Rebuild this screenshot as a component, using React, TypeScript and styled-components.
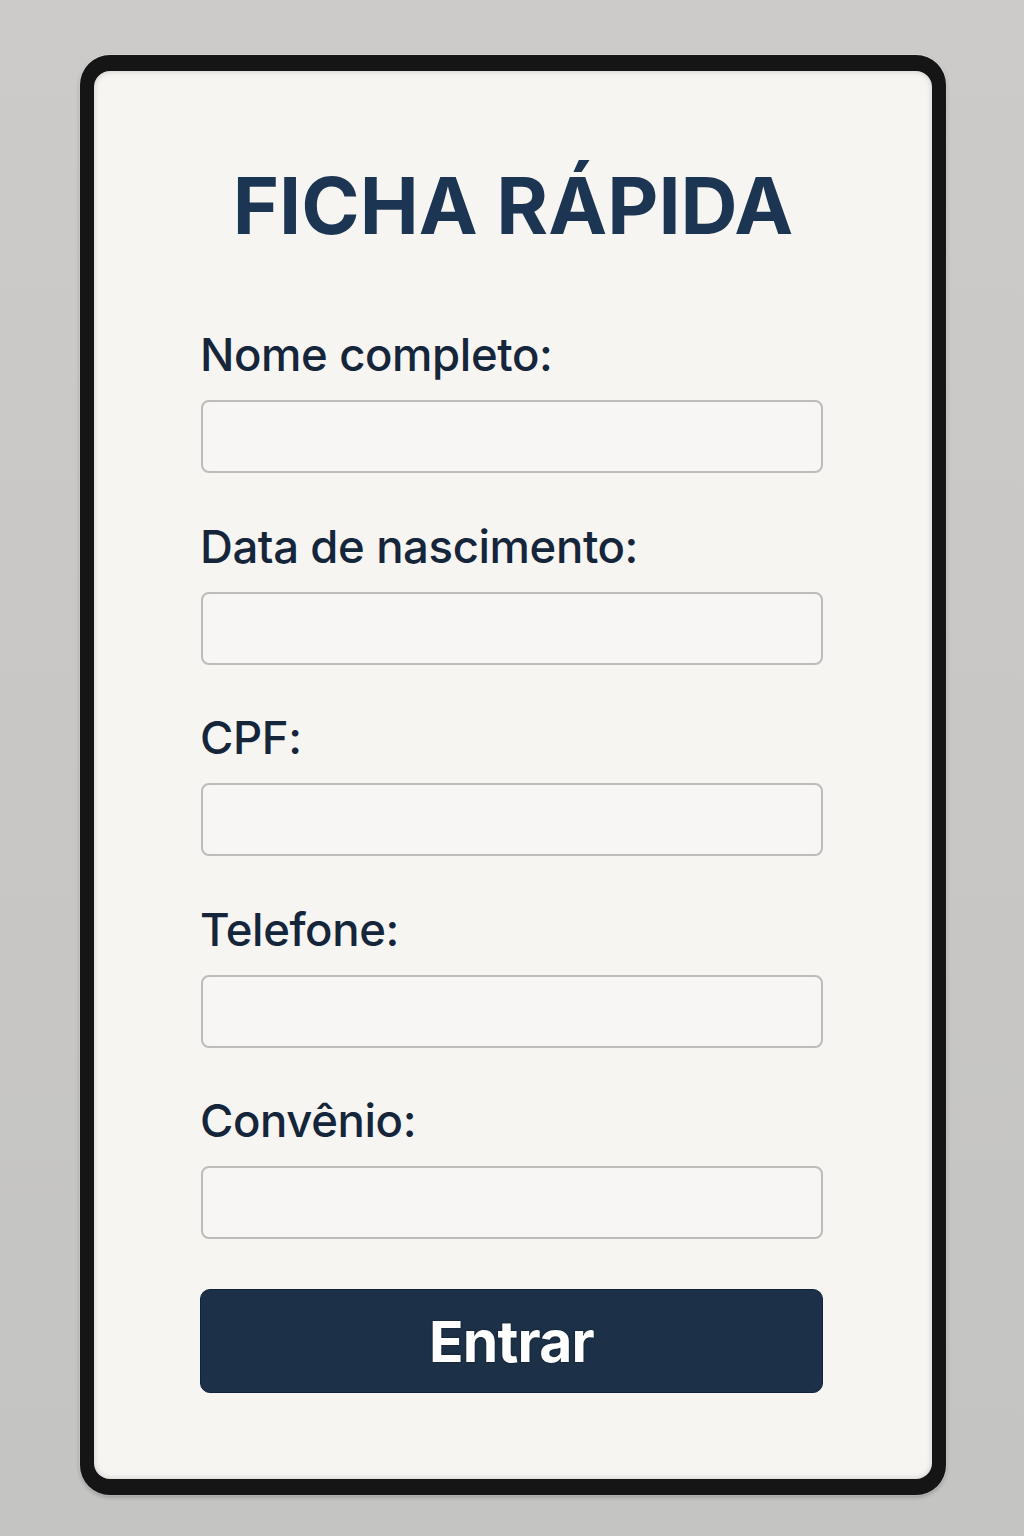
import React from "react";
import styled, { createGlobalStyle } from "styled-components";

const GlobalStyle = createGlobalStyle`
  html, body {
    margin: 0;
    padding: 0;
  }
  body {
    background: linear-gradient(180deg, #cccbc9 0%, #c8c7c5 50%, #c4c4c2 100%);
    font-family: Inter, "Liberation Sans", Arial, sans-serif;
    min-height: 1536px;
  }
`;

const Page = styled.div`
  width: 1024px;
  height: 1536px;
  box-sizing: border-box;
  padding-top: 55px;
  display: flex;
  justify-content: center;
  align-items: flex-start;
`;

const Device = styled.div`
  width: 866px;
  height: 1440px;
  box-sizing: border-box;
  margin-left: 2px;
  background: #151515;
  border-radius: 30px;
  padding: 16px 14px 16px 14px;
  display: flex;
  box-shadow: 0 2px 4px rgba(0, 0, 0, 0.25), 0 0 0 1px rgba(255, 255, 255, 0.35);
`;

const Screen = styled.main`
  flex: 1;
  background: #f6f5f2;
  border-radius: 16px;
  box-shadow: inset 0 0 6px rgba(0, 0, 0, 0.18);
  padding: 95px 109px 0 106px;
  display: flex;
  flex-direction: column;
  align-items: stretch;
`;

const Title = styled.h1`
  margin: 0 0 82px 3px;
  font-family: Inter, "Liberation Sans", Arial, sans-serif;
  font-weight: 700;
  font-size: 79px;
  line-height: 79px;
  letter-spacing: 0px;
  color: #1c3552;
  text-align: center;
`;

const Form = styled.form`
  display: flex;
  flex-direction: column;
  gap: 45.5px;
`;

const Field = styled.label`
  display: flex;
  flex-direction: column;
  gap: 17px;
`;

const LabelText = styled.span`
  font-family: Inter, "Liberation Sans", Arial, sans-serif;
  font-weight: 500;
  font-size: 45.5px;
  line-height: 56px;
  color: #15253a;
  letter-spacing: -0.4px;
`;

const Input = styled.input`
  box-sizing: border-box;
  width: calc(100% - 1px);
  height: 73px;
  margin-left: 1px;
  border: 2px solid #bcbcbb;
  border-radius: 8px;
  background: #f7f6f4;
  font-family: Inter, "Liberation Sans", Arial, sans-serif;
  font-size: 28px;
  padding: 0 16px;
  outline: none;
`;

const SubmitButton = styled.button`
  margin-top: 4.5px;
  height: 104px;
  border: 1px solid #12223a;
  border-radius: 10px;
  background: #1c3047;
  color: #ffffff;
  font-family: Inter, "Liberation Sans", Arial, sans-serif;
  font-weight: 700;
  font-size: 57px;
  letter-spacing: -0.8px;
  cursor: pointer;
  text-shadow: 0 0 2px rgba(0, 0, 0, 0.6);
`;

const fields = [
  "Nome completo:",
  "Data de nascimento:",
  "CPF:",
  "Telefone:",
  "Convênio:",
];

export default function App() {
  return (
    <>
      <GlobalStyle />
      <Page>
        <Device>
          <Screen>
            <Title>FICHA RÁPIDA</Title>
            <Form onSubmit={(e) => e.preventDefault()}>
              {fields.map((f) => (
                <Field key={f}>
                  <LabelText>{f}</LabelText>
                  <Input type="text" />
                </Field>
              ))}
              <SubmitButton type="submit">Entrar</SubmitButton>
            </Form>
          </Screen>
        </Device>
      </Page>
    </>
  );
}
